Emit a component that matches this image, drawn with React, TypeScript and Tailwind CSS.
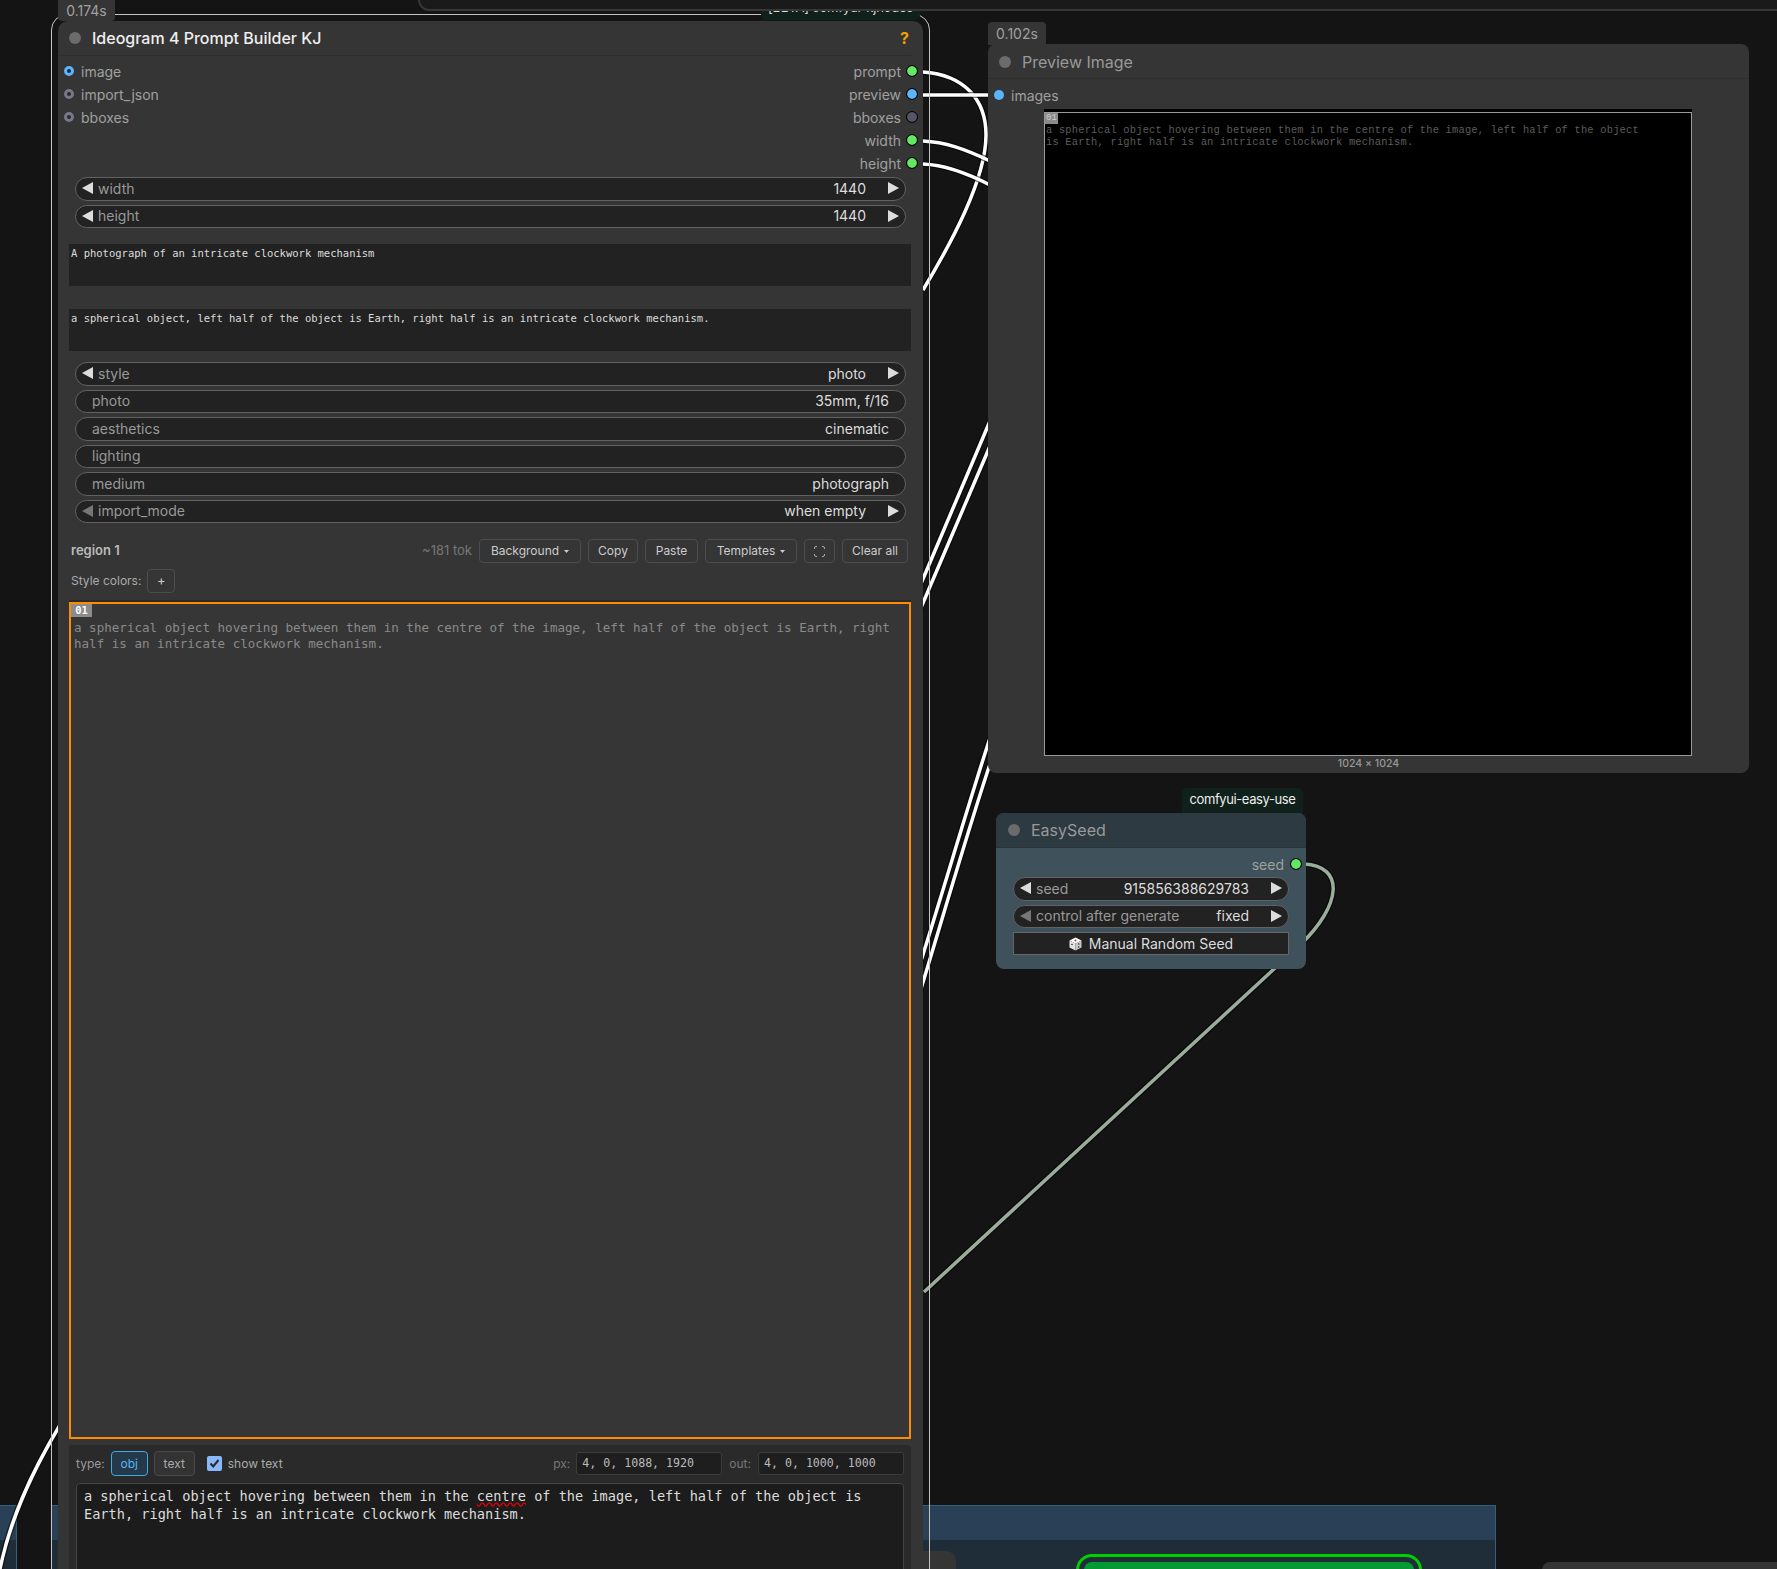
import React from "react";

const Tri = ({ dir, dim }: { dir: "l" | "r"; dim?: boolean }) => (
  <svg width="11" height="12" viewBox="0 0 11 12" className="shrink-0">
    <polygon points={dir === "l" ? "11,0 11,12 0,6" : "0,0 0,12 11,6"} fill={dim ? "#777777" : "#dddddd"} />
  </svg>
);

const Widget = ({ label, value, arrows, dimLeft }: { label: string; value?: string; arrows?: boolean; dimLeft?: boolean }) => (
  <div className="flex h-[23.5px] items-center rounded-full border border-[#626262] bg-[#222222] pb-[1.5px] text-[14px]">
    {arrows ? (
      <div className="flex flex-1 items-center pl-[6px] pr-[6px]">
        <Tri dir="l" dim={dimLeft} />
        <span className="ml-[5px] flex-1 text-[#999999]">{label}</span>
        <span className="mr-[22px] text-[#dddddd]">{value}</span>
        <Tri dir="r" />
      </div>
    ) : (
      <div className="flex flex-1 items-center justify-between px-[16px]">
        <span className="text-[#999999]">{label}</span>
        <span className="text-[#dddddd]">{value}</span>
      </div>
    )}
  </div>
);

const InDot = ({ color }: { color: string }) => (
  <span className="block h-[10px] w-[10px] rounded-full border-[3px] bg-[#2a2a2a]" style={{ borderColor: color }} />
);
const OutDot = ({ color }: { color: string }) => (
  <span className="block h-[10px] w-[10px] rounded-full outline outline-1 outline-black" style={{ background: color }} />
);

const Btn = ({ w, children }: { w: string; children: React.ReactNode }) => (
  <button className={`flex h-[24px] items-center justify-center gap-[5px] rounded-[4px] border border-[#4c4c4c] text-[12px] text-[#cccccc] ${w}`}>
    {children}
  </button>
);
const Caret = () => (
  <svg width="5" height="3" viewBox="0 0 5 3"><polygon points="0,0 5,0 2.5,3" fill="#cccccc" /></svg>
);

const Title = ({ text, bright, className }: { text: string; bright?: boolean; className: string }) => (
  <div className={`flex h-[35px] items-center border-b border-[#2e2e2e] ${className}`}>
    <span className="h-[12px] w-[12px] rounded-full bg-[#6b6b6b]" />
    <span className={`ml-[11px] text-[16px] ${bright ? "font-medium text-[#eeeeee]" : "text-[#999999]"}`}>{text}</span>
  </div>
);

const mono = "font-['DejaVu_Sans_Mono','Liberation_Mono',monospace]";

export default function App() {
  return (
    <div className="relative h-[1569px] w-[1777px] overflow-hidden bg-[#141414] font-['Inter',sans-serif]">
      {/* groups at the bottom of the canvas */}
      <div className="absolute left-0 top-[1505px] h-[80px] w-[17px] border-r border-t border-[#35607c] bg-[#1f2d38]">
        <div className="h-[34px] bg-[#2a4057]" />
      </div>
      <div className="absolute left-[51px] top-[1505px] h-[80px] w-[1445px] border-r border-t border-[#35607c] bg-[#1f2d38]">
        <div className="h-[34px] bg-[#2a4057]" />
      </div>
      <div className="absolute left-[923px] top-[1551px] h-[40px] w-[33px] rounded-tr-[10px] bg-[#353535]" />
      <div className="absolute left-[1076px] top-[1554px] h-[40px] w-[346px] rounded-t-[16px] border-[3px] border-[#00d000] p-[5px]">
        <div className="h-[30px] rounded-t-[8px] bg-[#059933]" />
      </div>
      <div className="absolute left-[1542px] top-[1562px] h-[30px] w-[235px] rounded-tl-[8px] bg-[#353535]" />

      {/* wires */}
      <svg className="absolute left-0 top-0" width="1777" height="1569" fill="none">
        {[
          "M923 72 C965 75 986 100 986 135 C986 180 950 245 923 290",
          "M923 95 L990 95",
          "M923 141 C945 142 965 149 990 161",
          "M923 164 C945 165 965 172 990 185",
          "M920 586 L990 421",
          "M920 610 L990 446",
          "M920 964 C945 885 968 805 990 738",
          "M920 992 C945 910 968 830 990 764",
          "M60 1425 C30 1475 10 1520 0 1569",
        ].map((d) => (
          <g key={d}>
            <path d={d} stroke="#000000" strokeOpacity="0.55" strokeWidth="6" />
            <path d={d} stroke="#ffffff" strokeWidth="3.5" />
          </g>
        ))}
        <path d="M1304 864 C1345 866 1342 905 1300 945 L924 1292" stroke="#000000" strokeOpacity="0.55" strokeWidth="6" />
        <path d="M1304 864 C1345 866 1342 905 1300 945 L924 1292" stroke="#9aad9b" strokeWidth="3.5" />
      </svg>

      {/* selection outline */}
      <div className="absolute left-[51px] top-[14px] h-[1600px] w-[879px] rounded-[16px] border border-[#c4c4c4]" />

      {/* badges */}
      <div className="absolute left-[58px] top-0 flex h-[21px] w-[57px] items-center justify-center rounded-b-[4px] bg-[#353535] text-[14px] text-[#a0a0a0]">0.174s</div>
      <div className="absolute left-[761px] top-[-4px] flex h-[24px] w-[159px] items-center justify-center whitespace-nowrap rounded-b-[5px] bg-[#10201a] text-[13px] tracking-[-0.2px] text-[#dddddd]">[BETA] comfyui-kjnodes</div>

      {/* top strip */}
      <div className="absolute left-[418px] top-0 h-[11px] w-[1359px] rounded-bl-[12px] border-b-2 border-l-2 border-[#363636] bg-[#1a1a1a]" />

      {/* main node */}
      <div className="absolute left-[58px] top-[21px] w-[865px] rounded-t-[10px] bg-[#353535]">
        <div className="flex items-center pr-[12px]">
          <Title text="Ideogram 4 Prompt Builder KJ" bright className="flex-1 pl-[11px]" />
        </div>
        <span className="absolute right-[14px] top-[5px] text-[16px] font-bold text-[#f0a000]">?</span>

        <div className="mt-[3.5px] flex h-[116px] justify-between pl-[6px] pr-[6px] text-[14px] text-[#a0a0a0]">
          <div>
            {[["image", "#5ab4ff"], ["import_json", "#77778c"], ["bboxes", "#77778c"]].map(([t, c]) => (
              <div key={t} className="flex h-[23px] items-center gap-[7px]">
                <InDot color={c} />
                <span>{t}</span>
              </div>
            ))}
          </div>
          <div>
            {[["prompt", "#62e862"], ["preview", "#5ab4ff"], ["bboxes", "#55556a"], ["width", "#62e862"], ["height", "#62e862"]].map(([t, c]) => (
              <div key={t} className="flex h-[23px] items-center justify-end gap-[6px]">
                <span>{t}</span>
                <OutDot color={c} />
              </div>
            ))}
          </div>
        </div>

        <div className="mx-[17px] mt-[1.5px] flex flex-col gap-[4px]">
          <Widget label="width" value="1440" arrows />
          <Widget label="height" value="1440" arrows />
        </div>

        <div className={`ml-[11px] mr-[12px] mt-[16px] h-[42px] bg-[#222222] px-[2px] pt-[2px] text-[10.5px] leading-[14px] text-[#dddddd] ${mono}`}>
          A photograph of an intricate clockwork mechanism
        </div>
        <div className={`ml-[11px] mr-[12px] mt-[23px] h-[42px] bg-[#222222] px-[2px] pt-[2px] text-[10.5px] leading-[14px] text-[#dddddd] ${mono}`}>
          a spherical object, left half of the object is Earth, right half is an intricate clockwork mechanism.
        </div>

        <div className="mx-[17px] mt-[11px] flex flex-col gap-[4px]">
          <Widget label="style" value="photo" arrows />
          <Widget label="photo" value="35mm, f/16" />
          <Widget label="aesthetics" value="cinematic" />
          <Widget label="lighting" value="" />
          <Widget label="medium" value="photograph" />
          <Widget label="import_mode" value="when empty" arrows dimLeft />
        </div>

        <div className="ml-[13px] mr-[15px] mt-[16px] flex h-[24px] items-center">
          <span className="text-[13px] font-semibold text-[#bbbbbb]">region 1</span>
          <span className="ml-auto mr-[7px] text-[13px] text-[#777777]">~181 tok</span>
          <div className="flex gap-[7px]">
            <Btn w="w-[102px]">Background <Caret /></Btn>
            <Btn w="w-[50px]">Copy</Btn>
            <Btn w="w-[53px]">Paste</Btn>
            <Btn w="w-[92px]">Templates <Caret /></Btn>
            <Btn w="w-[31px]">
              <svg width="11" height="11" viewBox="0 0 11 11" fill="none" stroke="#aaaaaa" strokeWidth="1">
                <path d="M0.5 3 V2 Q0.5 0.5 2 0.5 H3 M8 0.5 H9 Q10.5 0.5 10.5 2 V3 M10.5 8 V9 Q10.5 10.5 9 10.5 H8 M3 10.5 H2 Q0.5 10.5 0.5 9 V8" />
              </svg>
            </Btn>
            <Btn w="w-[66px]">Clear all</Btn>
          </div>
        </div>

        <div className="ml-[13px] mt-[6px] flex h-[24px] items-center gap-[6px]">
          <span className="pb-[1px] text-[12px] text-[#aaaaaa]">Style colors:</span>
          <button className="flex h-[24px] w-[28px] items-center justify-center rounded-[4px] border border-[#4c4c4c] pb-[1px] text-[13px] text-[#cccccc]">+</button>
        </div>

        <div className={`relative ml-[11px] mr-[12px] mt-[9px] h-[837px] border-2 border-[#ff8c00] bg-[#363636] shadow-[0_-2px_0_#2a2a2a] ${mono}`}>
          <div className="absolute left-0 top-0 flex h-[13px] w-[21px] items-center justify-center bg-[#8c8c8c] text-[10.5px] font-bold text-white">01</div>
          <div className="w-[824px] pl-[3px] pt-[16px] text-[12.55px] leading-[16px] text-[#8a8a8a]">
            a spherical object hovering between them in the centre of the image, left half of the object is Earth, right half is an intricate clockwork mechanism.
          </div>
        </div>

        <div className="ml-[11px] mr-[12px] mt-[6px] h-[130px] rounded-t-[4px] bg-[#2a2a2a] px-[7px] pt-[6px]">
          <div className="flex h-[25px] items-center text-[12px]">
            <span className="text-[#999999]">type:</span>
            <button className="ml-[6px] flex h-[25px] w-[37px] items-center justify-center rounded-[4px] border border-[#45a8e0] bg-[#24394a] text-[#5ab4f0]">obj</button>
            <button className="ml-[6px] flex h-[25px] w-[41px] items-center justify-center rounded-[4px] border border-[#4a4a4a] bg-[#333333] text-[#aaaaaa]">text</button>
            <span className="ml-[12px] flex h-[15px] w-[15px] items-center justify-center rounded-[2px] bg-[#8ab8f8]">
              <svg width="11" height="11" viewBox="0 0 11 11" fill="none" stroke="#2a2a2a" strokeWidth="2"><path d="M1.5 5.5 L4.2 8.5 L9.5 2" /></svg>
            </span>
            <span className="ml-[6px] text-[#aaaaaa]">show text</span>
            <span className="ml-auto mr-[6px] text-[#777777]">px:</span>
            <div className={`flex h-[23px] w-[146px] items-center rounded-[3px] border border-[#3c3c3c] bg-[#1e1e1e] pl-[5px] text-[11.6px] text-[#bbbbbb] ${mono}`}>4, 0, 1088, 1920</div>
            <span className="ml-[7px] mr-[7px] text-[#777777]">out:</span>
            <div className={`flex h-[23px] w-[146px] items-center rounded-[3px] border border-[#3c3c3c] bg-[#1e1e1e] pl-[5px] text-[11.6px] text-[#bbbbbb] ${mono}`}>4, 0, 1000, 1000</div>
          </div>
          <div className={`mt-[7px] h-[100px] rounded-t-[4px] border border-[#444444] bg-[#1c1c1c] px-[7px] pt-[3px] text-[13.6px] leading-[18px] text-[#dddddd] ${mono}`}>
            a spherical object hovering between them in the{" "}
            <span className="underline decoration-red-600 decoration-wavy">centre</span> of the image, left half of the object is Earth, right half is an intricate clockwork mechanism.
          </div>
        </div>
      </div>

      {/* preview node */}
      <div className="absolute left-[988px] top-[22px] flex h-[23px] w-[58px] items-center justify-center rounded-t-[4px] bg-[#353535] text-[14px] text-[#a0a0a0]">0.102s</div>
      <div className="absolute left-[988px] top-[44px] h-[729px] w-[761px] rounded-[8px] bg-[#353535]">
        <Title text="Preview Image" className="pl-[11px] pt-[1px]" />
        <div className="mt-[4.5px] flex h-[23px] items-center gap-[7px] pl-[6px] text-[14px] text-[#a0a0a0]">
          <span className="h-[10px] w-[10px] rounded-full bg-[#5ab4ff]" />
          images
        </div>
        <div className="mt-[2.5px] flex justify-center pr-[1px]">
          <div className="w-[648px] bg-black pt-[3px]">
            <div className="relative h-[644px] border border-[#9a9a9a] bg-black font-['Liberation_Mono',monospace] text-[10.42px] leading-[11.5px] tracking-[0.2px] text-[#5c5c5c]">
              <div className="absolute left-0 top-0 flex h-[11px] w-[13px] items-center justify-center bg-[#8a8a8a] text-[9px] text-[#cccccc]">01</div>
              <div className="w-[612px] pl-[1px] pt-[12px]">a spherical object hovering between them in the centre of the image, left half of the object is Earth, right half is an intricate clockwork mechanism.</div>
            </div>
          </div>
        </div>
        <div className="mt-[1px] text-center text-[10.5px] font-medium leading-[14px] text-[#999999]">1024 × 1024</div>
      </div>

      {/* easy seed node */}
      <div className="absolute left-[1182px] top-[788px] flex h-[25px] w-[121px] items-center justify-center rounded-t-[5px] bg-[#10201a] pb-[2px] text-[13px] tracking-[-0.4px] text-[#eeeeee]">comfyui-easy-use</div>
      <div className="absolute left-[996px] top-[813px] h-[156px] w-[310px] overflow-hidden rounded-[8px] bg-[#3f515a]">
        <Title text="EasySeed" className="border-[#28343b] bg-[#2d3a42] pl-[12px]" />
        <div className="mt-[4.5px] flex h-[23px] items-center justify-end gap-[7px] pr-[5px] text-[14px] text-[#a0a0a0]">
          seed
          <OutDot color="#62e862" />
        </div>
        <div className="mx-[17px] mt-[1.5px] flex flex-col gap-[4px]">
          <Widget label="seed" value="915856388629783" arrows />
          <Widget label="control after generate" value="fixed" arrows dimLeft />
          <button className="flex h-[23px] items-center justify-center gap-[7px] border border-[#666666] bg-[#222222] text-[14px] text-[#dddddd]">
            <svg width="13" height="14" viewBox="0 0 13 14">
              <polygon points="6.5,0.5 12.5,3.5 6.5,6.5 0.5,3.5" fill="#ffffff" />
              <polygon points="0.5,3.5 6.5,6.5 6.5,13.5 0.5,10.5" fill="#e4e4e4" />
              <polygon points="12.5,3.5 6.5,6.5 6.5,13.5 12.5,10.5" fill="#c8c8c8" />
              <circle cx="6.5" cy="3.5" r="1" fill="#d02828" />
              <circle cx="3" cy="7.5" r="0.8" fill="#333333" />
              <circle cx="9.7" cy="7" r="0.8" fill="#333333" />
              <circle cx="9.7" cy="10" r="0.8" fill="#333333" />
            </svg>
            Manual Random Seed
          </button>
        </div>
      </div>
    </div>
  );
}
